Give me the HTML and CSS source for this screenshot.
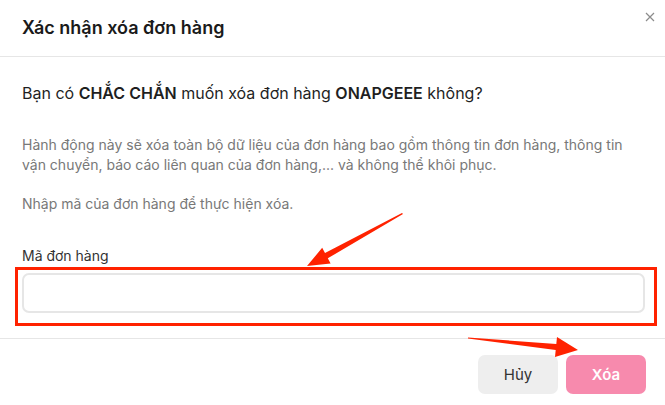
FILE: index.html
```html
<!DOCTYPE html>
<html>
<head>
  <meta charset="UTF-8">
  <title>Xác nhận xóa đơn hàng</title>
  <link rel="stylesheet" href="styles.css">
</head>
<body>
  <div class="modal">
    <div class="modal-header">
      <h2 class="modal-title">Xác nhận xóa đơn hàng</h2>
      <button class="close-btn" aria-label="Đóng">
        <svg width="10" height="10" viewBox="0 0 10 10">
          <path d="M1 1L9 9M9 1L1 9" stroke="#8c8c8c" stroke-width="1.2" fill="none"/>
        </svg>
      </button>
    </div>
    <div class="modal-body">
      <p class="question">Bạn có <b>CHẮC CHẮN</b> muốn xóa đơn hàng <b>ONAPGEEE</b> không?</p>
      <p class="note">Hành động này sẽ xóa toàn bộ dữ liệu của đơn hàng bao gồm thông tin đơn hàng, thông tin vận chuyển, báo cáo liên quan của đơn hàng,... và không thể khôi phục.</p>
      <p class="note">Nhập mã của đơn hàng để thực hiện xóa.</p>
      <label class="field-label" for="order-code">Mã đơn hàng</label>
      <input class="field-input" id="order-code" type="text">
    </div>
    <div class="modal-footer">
      <button class="btn btn-cancel">Hủy</button>
      <button class="btn btn-delete">Xóa</button>
    </div>
  </div>

  <!-- annotation overlay -->
  <div class="highlight-box"></div>
  <svg class="arrows" width="665" height="405" viewBox="0 0 665 405">
    <polygon fill="#ff2200" points="403,214 327.8,258.3 330.6,263.6 307,266 322.2,247.8 325,253.1 402,213"/>
    <polygon fill="#ff2200" points="468,337.5 556.3,344 557,337 578,350 555,357 555.7,350 468,338.5"/>
  </svg>
</body>
</html>
```

FILE: styles.css
```css
body {
  margin: 0;
  font-family: Inter, "Noto Sans", sans-serif;
  background: #fff;
  color: #1f1f1f;
}
.modal {
  width: 665px;
  height: 405px;
  background: #fff;
}
.modal-header {
  display: flex;
  justify-content: space-between;
  align-items: flex-start;
  padding: 16px 10px 16px 22px;
  border-bottom: 1px solid #e6e6e6;
}
.modal-title {
  margin: 0;
  font-size: 18px;
  line-height: 24px;
  font-weight: 600;
  color: #1a1a1a;
}
.close-btn {
  border: none;
  background: none;
  padding: 0;
  margin-top: -4px;
  width: 10px;
  height: 10px;
  display: flex;
}
.modal-body {
  padding: 24px 20px 25px 22px;
  display: flex;
  flex-direction: column;
}
.question {
  margin: 0 0 30px;
  font-size: 16px;
  line-height: 24px;
}
.question b {
  font-weight: 600;
}
.note {
  margin: 0 0 20px;
  font-size: 14px;
  line-height: 19.5px;
  color: #787878;
}
.field-label {
  margin-top: 12px;
  font-size: 14px;
  line-height: 20px;
  color: #333;
}
.field-input {
  margin-top: 7px;
  box-sizing: border-box;
  width: 623px;
  height: 40px;
  border: 2px solid #e6e6e6;
  border-radius: 7px;
  outline: none;
}
.modal-footer {
  display: flex;
  justify-content: flex-end;
  gap: 8px;
  padding: 16px 19px 11px;
  border-top: 1px solid #e6e6e6;
}
.btn {
  width: 80px;
  height: 39px;
  border: none;
  border-radius: 7px;
  font-family: Inter, "Noto Sans", sans-serif;
  font-size: 15px;
}
.btn-cancel {
  background: #eeeeee;
  color: #333;
}
.btn-delete {
  background: #f78aad;
  color: #fff;
  font-weight: 600;
}
.highlight-box {
  position: absolute;
  left: 15px;
  top: 267px;
  width: 636px;
  height: 53px;
  border: 3px solid #ff2200;
}
.arrows {
  position: absolute;
  left: 0;
  top: 0;
}
```
